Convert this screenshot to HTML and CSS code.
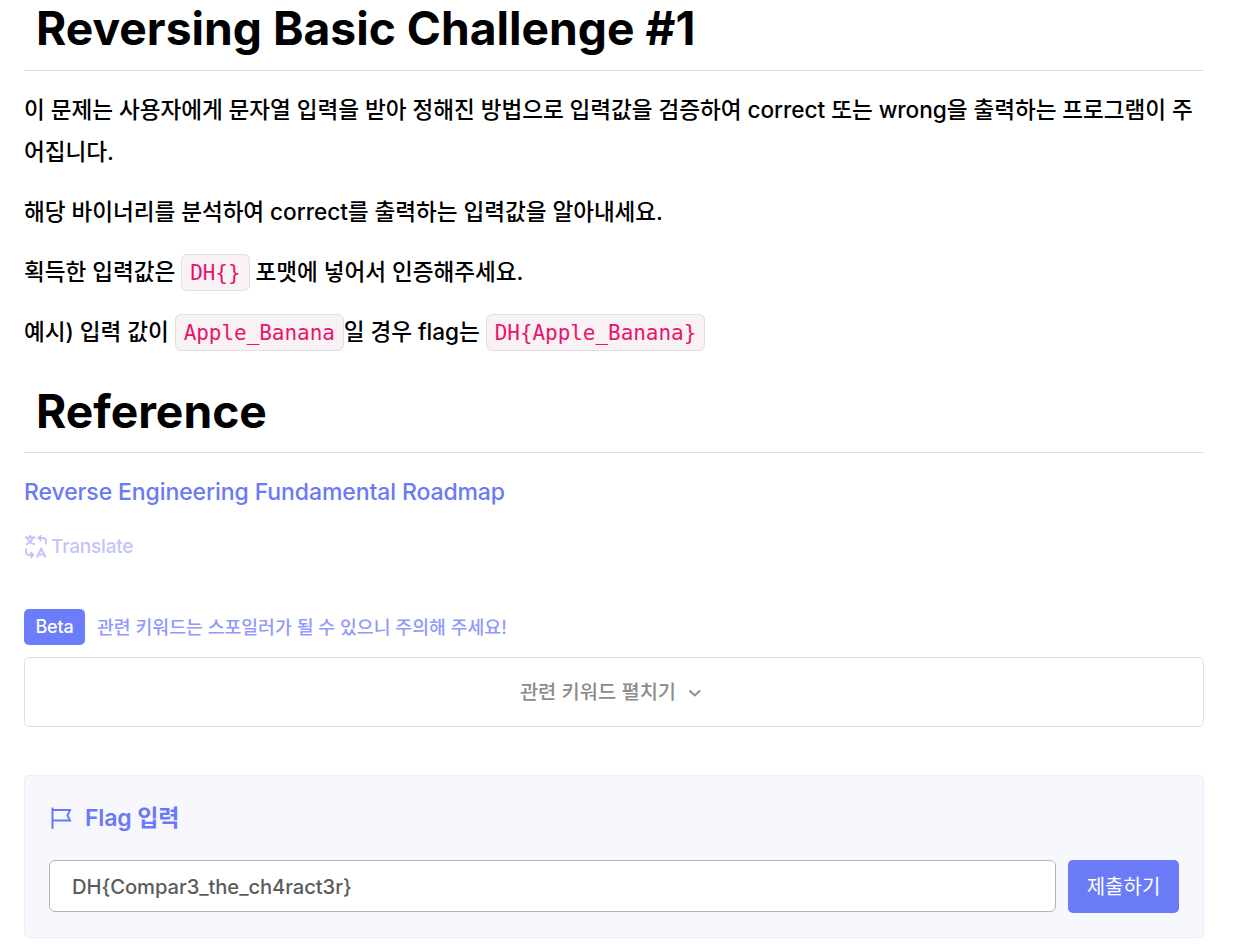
FILE: index.html
```html
<!DOCTYPE html>
<html lang="ko">
<head>
<meta charset="utf-8">
<title>Reversing Basic Challenge #1</title>
<link rel="stylesheet" href="styles.css">
</head>
<body>
<main class="page">
<article class="description">
<h1 class="title title-first">Reversing Basic Challenge #1</h1>
<p>이 문제는 사용자에게 문자열 입력을 받아 정해진 방법으로 입력값을 검증하여 correct 또는 wrong을 출력하는 프로그램이 주<br>어집니다.</p>
<p>해당 바이너리를 분석하여 correct를 출력하는 입력값을 알아내세요.</p>
<p>획득한 입력값은 <code>DH{}</code> 포맷에 넣어서 인증해주세요.</p>
<p>예시) 입력 값이 <code>Apple_Banana</code>일 경우 flag는 <code>DH{Apple_Banana}</code></p>
<h1 class="title title-second">Reference</h1>
<p class="roadmap"><a href="#">Reverse Engineering Fundamental Roadmap</a></p>
</article>
<button class="translate">
<svg width="24" height="24" viewBox="0 0 24 24" fill="none" stroke="currentColor" stroke-width="1.900"><path d="M1 2.500h10.500M6.200 0v2.500M2 9.500c4-1.500 6-3.500 6.700-7M3.500 3c1 3.500 3.500 5.500 7.500 6.500M14.500 3h4q3.500 0 3.500 3.500v3M17.300 .3l-2.800 2.700 2.800 2.700M2 13.500v3q0 3.500 3.500 3.500h3.500M6.500 17l2.800 3-2.800 2.700M12.700 22.500l4.500-9L21.700 22.500M14.200 19.500h6"/></svg>
<span>Translate</span></button>
<div class="notice"><span class="beta">Beta</span><span>관련 키워드는 스포일러가 될 수 있으니 주의해 주세요!</span></div>
<button class="expand"><span>관련 키워드 펼치기</span><svg width="14" height="14" viewBox="0 0 14 14" fill="none" stroke="currentColor" stroke-width="2"><path d="M1.500 5.500l5.300 5 5.300-5"/></svg></button>
<section class="flag">
<h2><svg width="24" height="24" viewBox="0 0 24 24" fill="none" stroke="currentColor" stroke-width="2"><path d="M3.500 23V1.500M3.500 4H21L18.500 9.500l2.500 5H3.500"/></svg><span>Flag 입력</span></h2>
<form class="entry"><input value="DH{Compar3_the_ch4ract3r}" aria-label="Flag"><button type="button" class="submit">제출하기</button></form>
</section>
</main>
</body>
</html>
```
FILE: styles.css
```css
* { box-sizing: border-box; }
body { margin: 0; background: #fff; color: #000; font: 500 22.6px/42px Inter, "Noto Sans CJK KR", sans-serif; }
.page { width: 1236px; height: 952px; padding: 0 32px 0 24px; overflow: hidden; }
p { height: 42px; margin: 0 0 18px; white-space: nowrap; font-weight: 450; letter-spacing: -.045px; }
.title-first + p { height: 84px; }
.title { margin: 0; border-bottom: 1px solid #dedde2; padding-left: 12px; font-size: 46.2px; font-weight: 700; line-height: 57px; }
.title-first { height: 71px; margin-bottom: 18px; }
.title-second { height: 71px; margin: 29px 0 18px; line-height: 59px; }
code { display: inline-block; height: 37px; padding: 1px 8px 0; border: 1px solid #e0dde6; border-radius: 6px; background: #f8f2f5; color: #e8156b; font: 400 21px/35px "DejaVu Sans Mono", monospace; vertical-align: 0; }
a { color: #6979f8; text-decoration: none; }
.roadmap { font-size: 23px; letter-spacing: -.1px; }
button { font: inherit; }
.translate { display: flex; align-items: center; gap: 3px; height: 24px; margin-top: 22px; padding: 0; border: 0; background: none; color: #c3c4fd; font-size: 19px; letter-spacing: -.2px; }
.notice { display: flex; align-items: center; gap: 12px; height: 36px; margin-top: 50px; color: #9199fb; font-size: 18.3px; }
.beta { width: 61px; height: 36px; border-radius: 5px; background: #6b7dfb; color: #fff; text-align: center; font-size: 18px; letter-spacing: -.2px; line-height: 36px; }
.expand { display: flex; align-items: center; justify-content: center; gap: 12px; width: 100%; height: 70px; margin-top: 12px; padding: 0 6px 0 0; border: 1px solid #e0e0e0; border-radius: 5px; background: #fff; color: #8c8c8c; font-size: 19.8px; font-weight: 500; }
.flag { height: 163px; margin-top: 48px; padding: 21px 24px; border: 1px solid #ebedfd; border-radius: 5px; background: #f6f8fe; }
h2 { display: flex; align-items: center; gap: 12px; margin: 0; color: #6979f8; font-size: 23px; font-weight: 600; line-height: 42px; letter-spacing: -.15px; }
.entry { display: flex; gap: 12px; margin-top: 21px; }
input { flex: 1; height: 52px; padding: 1px 22px 0; border: 1px solid #b2b3bc; border-radius: 6px; background: #fff; color: #5c5c5c; font: 450 20.2px Inter, sans-serif; letter-spacing: -.08px; }
.submit { width: 111px; height: 53px; padding: 0; border: 0; border-radius: 5px; background: #6b7bf8; color: #fff; font-size: 20px; font-weight: 400; }
```
